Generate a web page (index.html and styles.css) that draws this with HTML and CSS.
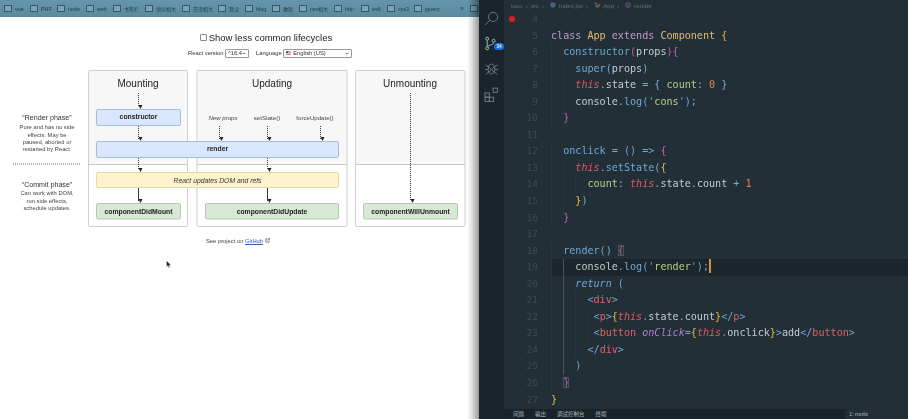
FILE: index.html
```html
<!DOCTYPE html>
<html lang="en">
<head>
    <meta charset="UTF-8">
    <meta name="viewport" content="width=device-width, initial-scale=1.0">
    <title>React lifecycle and App</title>
    <link rel="stylesheet" href="styles.css">
</head>
<body>
    <div class="browser">
        <div class="bookmarks">
            <span class="mark"><i class="folder"></i>vue</span>
            <span class="mark"><i class="folder"></i>PHP</span>
            <span class="mark"><i class="folder"></i>node</span>
            <span class="mark"><i class="folder"></i>web</span>
            <span class="mark cjk"><i class="folder"></i>书签栏</span>
            <span class="mark cjk"><i class="folder"></i>领导相关</span>
            <span class="mark cjk"><i class="folder"></i>日语相关</span>
            <span class="mark cjk"><i class="folder"></i>算法</span>
            <span class="mark"><i class="folder"></i>blog</span>
            <span class="mark cjk"><i class="folder"></i>教程</span>
            <span class="mark cjk"><i class="folder"></i>pos相关</span>
            <span class="mark"><i class="folder"></i>http</span>
            <span class="mark"><i class="folder"></i>es6</span>
            <span class="mark"><i class="folder"></i>css3</span>
            <span class="mark"><i class="folder"></i>jquery</span>
            <span class="mark more">»</span>
            <span class="mark"><i class="folder"></i></span>
        </div>
        <div class="lifecycle">
            <div class="toggle"><i class="checkbox"></i>Show less common lifecycles</div>
            <div class="options">
                <span>React version</span>
                <span class="select version">^16.4<svg class="chevron" viewBox="0 0 6 4"><path d="M1 1l2 2 2-2"/></svg></span>
                <span class="lang-label">Language</span>
                <span class="select language">
                    <svg class="flag" viewBox="0 0 6 4"><rect width="6" height="4" fill="#d8505a"/><rect y="1" width="6" height=".7" fill="#fff"/><rect y="2.5" width="6" height=".7" fill="#fff"/><rect width="2.6" height="2" fill="#3c4f9c"/></svg>
                    English (US)
                    <svg class="chevron" viewBox="0 0 6 4"><path d="M1 1l2 2 2-2"/></svg>
                </span>
            </div>
            <svg class="diagram" viewBox="0 60 470 178" width="470" height="178">
                <defs>
                    <marker id="tip" markerUnits="userSpaceOnUse" markerWidth="4" markerHeight="4" refX="1.5" refY="3" orient="auto-start-reverse" viewBox="0 0 3 3"><path d="M0 0L3 1.5L0 3z" fill="#222"/></marker>
                </defs>

                <rect class="panel-top" x="88.5" y="70.5" width="99" height="94"/>
                <rect class="panel-top" x="197" y="70.5" width="150" height="94"/>
                <rect class="panel-top" x="355.5" y="70.5" width="109.500" height="94"/>
                <rect class="panel" x="88.5" y="70.5" width="99" height="156" rx="1"/>
                <rect class="panel" x="197" y="70.5" width="150" height="156" rx="1"/>
                <rect class="panel" x="355.5" y="70.5" width="109.500" height="156" rx="1"/>
                <path class="rule" d="M88 164.500H188M197 164.500H347M355 164.500H465"/>

                <text class="heading" x="138" y="87">Mounting</text>
                <text class="heading" x="272" y="87">Updating</text>
                <text class="heading" x="410" y="87">Unmounting</text>

                <rect class="box blue" x="96.500" y="109.500" width="84" height="16" rx="1.500"/>
                <rect class="box blue" x="96.500" y="141.500" width="242" height="16" rx="1.500"/>
                <rect class="box yellow" x="96.500" y="172.500" width="242" height="15" rx="1.500"/>
                <rect class="box green" x="96.500" y="203.500" width="84" height="15.500" rx="1.500"/>
                <rect class="box green" x="205.500" y="203.500" width="133" height="15.500" rx="1.500"/>
                <rect class="box green" x="363.500" y="203.500" width="94" height="15.500" rx="1.500"/>

                <text class="method" x="138.500" y="119">constructor</text>
                <text class="method" x="217.500" y="151">render</text>
                <text class="commit" x="217.500" y="182.500">React updates DOM and refs</text>
                <text class="method" x="138.500" y="213.500">componentDidMount</text>
                <text class="method" x="272" y="213.500">componentDidUpdate</text>
                <text class="method" x="410.500" y="213.500">componentWillUnmount</text>

                <text class="trigger" x="223" y="119.500">New props</text>
                <text class="trigger plain" x="267" y="119.500">setState()</text>
                <text class="trigger plain" x="315" y="119.500">forceUpdate()</text>

                <g class="dots">
                    <line x1="138.500" y1="93" x2="138.500" y2="107"/>
                    <line x1="138.500" y1="126" x2="138.500" y2="139"/>
                    <line x1="138.500" y1="158" x2="138.500" y2="170"/>
                    <line x1="219.500" y1="126" x2="219.500" y2="139"/>
                    <line x1="267.500" y1="126" x2="267.500" y2="139"/>
                    <line x1="320.500" y1="126" x2="320.500" y2="139"/>
                    <line x1="267.500" y1="158" x2="267.500" y2="170"/>
                    <line x1="410.500" y1="93" x2="410.500" y2="201"/>
                </g>
                <g class="solid">
                    <line x1="138.500" y1="188" x2="138.500" y2="201"/>
                    <line x1="267.500" y1="188" x2="267.500" y2="201"/>
                </g>

                <text class="phase" x="47" y="120">“Render phase”</text>
                <text class="phase-text" x="47" y="129">Pure and has no side</text>
                <text class="phase-text" x="47" y="136.500">effects. May be</text>
                <text class="phase-text" x="47" y="143.500">paused, aborted or</text>
                <text class="phase-text" x="47" y="151">restarted by React.</text>
                <line class="split" x1="13" y1="164" x2="80" y2="164"/>
                <text class="phase" x="47" y="186.500">“Commit phase”</text>
                <text class="phase-text" x="47" y="195">Can work with DOM,</text>
                <text class="phase-text" x="47" y="202.500">run side effects,</text>
                <text class="phase-text" x="47" y="210">schedule updates.</text>
            </svg>
            <div class="project">See project on <a href="#">GitHub</a> <svg class="external" viewBox="0 0 6 6"><path d="M3 1H1v4h4V3M3 3l2.500-2.500M4 .5h1.500V2"/></svg></div>
        </div>
        <svg class="pointer" viewBox="0 0 6 9"><path d="M.5.5v6.500l1.500-1.300 1 2.300 1-.5-1-2.200h2z"/></svg>
    </div>

    <div class="activity">
        <span class="activity-item"><svg viewBox="0 0 14 14"><circle cx="8.500" cy="5.500" r="4.300"/><path d="M5.500 8.700L1 13"/></svg></span>
        <span class="activity-item bright">
            <svg viewBox="0 0 14 14"><circle cx="3" cy="2.500" r="1.400"/><circle cx="3" cy="11.500" r="1.400"/><circle cx="9" cy="4.500" r="1.400"/><path d="M3 4v6M9 6c0 2.500-4 2-6 4"/></svg>
            <b class="badge">34</b>
        </span>
        <span class="activity-item"><svg viewBox="0 0 14 14"><path d="M4 6c0-4 6-4 6 0v3c0 4-6 4-6 0zM4 5l6 6M10 5l-6 6M1.500 3.500L4 5.500M12.500 3.500L10 5.500M1 8h3M10 8h3M1.500 12.500L4 10.500M12.500 12.500L10 10.500"/></svg></span>
        <span class="activity-item"><svg viewBox="0 0 14 14"><rect x="1" y="5.500" width="4" height="4"/><rect x="1" y="9.500" width="4" height="4"/><rect x="5" y="9.500" width="4" height="4"/><rect x="8.500" y="1" width="4" height="4"/></svg></span>
    </div>

    <div class="editor">
        <div class="breadcrumbs">
            <span class="crumb">toco</span><span class="sep">›</span>
            <span class="crumb">src</span><span class="sep">›</span>
            <span class="crumb"><svg class="crumb-icon" viewBox="0 0 8 8"><ellipse cx="4" cy="4" rx="3.500" ry="1.400"/><ellipse cx="4" cy="4" rx="3.500" ry="1.400" transform="rotate(60 4 4)"/><ellipse cx="4" cy="4" rx="3.500" ry="1.400" transform="rotate(120 4 4)"/></svg>index.jsx</span><span class="sep">›</span>
            <span class="crumb"><svg class="crumb-icon app" viewBox="0 0 8 8"><path d="M1 2l2-1 1 1-2 1zM5 4l2-1v3l-2 1zM2 5l2-1 1 2-2 1z"/></svg>App</span><span class="sep">›</span>
            <span class="crumb"><svg class="crumb-icon method-icon" viewBox="0 0 8 8"><circle cx="4" cy="4" r="3.200"/><path d="M2.500 3.500L4 4.500l1.500-1M4 4.500V6"/></svg>render</span>
        </div>
        <div class="code">
<div class="line"><span class="ln">4</span><i class="breakpoint"></i></div>
<div class="line"><span class="ln">5</span><code><span class="k">class</span> <span class="y">App</span> <span class="k">extends</span> <span class="y">Component</span> <span class="b1">{</span></code></div>
<div class="line"><span class="ln">6</span><code><span class="ind">  </span><span class="f">constructor</span><span class="b2">(</span><span class="p">props</span><span class="b2">){</span></code></div>
<div class="line"><span class="ln">7</span><code><span class="ind">    </span><span class="f">super</span><span class="f">(</span><span class="p">props</span><span class="f">)</span></code></div>
<div class="line"><span class="ln">8</span><code><span class="ind">    </span><span class="r">this</span><span class="f">.</span><span class="p">state</span> <span class="o">=</span> <span class="f">{</span> <span class="s">count</span><span class="o">:</span> <span class="n">0</span> <span class="f">}</span></code></div>
<div class="line"><span class="ln">9</span><code><span class="ind">    </span><span class="p">console</span><span class="f">.log(</span><span class="f">'</span><span class="s">cons</span><span class="f">');</span></code></div>
<div class="line"><span class="ln">10</span><code><span class="ind">  </span><span class="b2">}</span></code></div>
<div class="line"><span class="ln">11</span></div>
<div class="line"><span class="ln">12</span><code><span class="ind">  </span><span class="f">onclick</span> <span class="o">=</span> <span class="f">()</span> <span class="f">=&gt;</span> <span class="b2">{</span></code></div>
<div class="line"><span class="ln">13</span><code><span class="ind">    </span><span class="r">this</span><span class="f">.setState(</span><span class="b1">{</span></code></div>
<div class="line"><span class="ln">14</span><code><span class="ind">      </span><span class="s">count</span><span class="o">:</span> <span class="r">this</span><span class="f">.</span><span class="p">state</span><span class="f">.</span><span class="p">count</span> <span class="o">+</span> <span class="n">1</span></code></div>
<div class="line"><span class="ln">15</span><code><span class="ind">    </span><span class="b1">}</span><span class="f">)</span></code></div>
<div class="line"><span class="ln">16</span><code><span class="ind">  </span><span class="b2">}</span></code></div>
<div class="line"><span class="ln">17</span></div>
<div class="line"><span class="ln">18</span><code><span class="ind">  </span><span class="f">render()</span> <span class="b2 match">{</span></code></div>
<div class="line current"><span class="ln">19</span><code><span class="ind act">    </span><span class="p">console</span><span class="f">.log(</span><span class="f">'</span><span class="s">render</span><span class="f">');</span><i class="caret"></i></code></div>
<div class="line"><span class="ln">20</span><code><span class="ind act">    </span><span class="ret">return</span> <span class="f">(</span></code></div>
<div class="line"><span class="ln">21</span><code><span class="ind act">      </span><span class="f">&lt;</span><span class="tag">div</span><span class="f">&gt;</span></code></div>
<div class="line"><span class="ln">22</span><code><span class="ind act">       </span><span class="f">&lt;</span><span class="tag">p</span><span class="f">&gt;</span><span class="b1">{</span><span class="r">this</span><span class="f">.</span><span class="p">state</span><span class="f">.</span><span class="p">count</span><span class="b1">}</span><span class="f">&lt;/</span><span class="tag">p</span><span class="f">&gt;</span></code></div>
<div class="line"><span class="ln">23</span><code><span class="ind act">       </span><span class="f">&lt;</span><span class="tag">button</span> <span class="at">onClick</span><span class="f">=</span><span class="b1">{</span><span class="r">this</span><span class="f">.</span><span class="p">onclick</span><span class="b1">}</span><span class="f">&gt;</span><span class="p">add</span><span class="f">&lt;/</span><span class="tag">button</span><span class="f">&gt;</span></code></div>
<div class="line"><span class="ln">24</span><code><span class="ind act">      </span><span class="f">&lt;/</span><span class="tag">div</span><span class="f">&gt;</span></code></div>
<div class="line"><span class="ln">25</span><code><span class="ind act">    </span><span class="f">)</span></code></div>
<div class="line"><span class="ln">26</span><code><span class="ind">  </span><span class="b2 match">}</span></code></div>
<div class="line"><span class="ln">27</span><code><span class="b1">}</span></code></div>
        </div>
        <div class="panel-tabs">
            <span>问题</span>
            <span>输出</span>
            <span>调试控制台</span>
            <span>终端</span>
            <span class="terminal-pick">1: node</span>
        </div>
    </div>
</body>
</html>
```

FILE: styles.css
```css
body{
    margin: 0;
    width: 908px;
    height: 419px;
    overflow: hidden;
    display: flex;
    background-color: #232f36;
}

/* browser side */
.browser{
    position: relative;
    width: 479px;
    flex: none;
    background-color: #fff;
    font-family: "Liberation Sans", Arial, "Noto Sans CJK SC", sans-serif;
    overflow: hidden;
}
.browser::after{
    content: "";
    position: absolute;
    top: 0;
    right: 0;
    bottom: 0;
    width: 12px;
    background: linear-gradient(90deg, rgba(0,0,0,0), rgba(0,0,0,.1) 35%, rgba(0,0,0,.4));
}
.bookmarks{
    display: grid;
    grid-template-columns: 26px 27px 29px 27px 32px 37px 36px 27px 27px 27px 35px 27px 26px 27px 46px 10px 9px;
    align-items: center;
    height: 17px;
    padding-left: 4px;
    background: linear-gradient(#6596ab, #5b8a9e);
    color: #223f4d;
    font-size: 5.4px;
    white-space: nowrap;
    filter: blur(.4px);
}
.mark{
    display: flex;
    align-items: center;
}
.mark.cjk{
    font-size: 5px;
}
.mark.more{
    font-size: 7px;
}
.folder{
    flex: none;
    width: 6px;
    height: 5px;
    margin-right: 3px;
    border: 1px solid #34586a;
    background-color: #7ba4b5;
}
.lifecycle{
    width: 470px;
    filter: blur(.35px);
}
.toggle{
    display: flex;
    align-items: center;
    justify-content: center;
    height: 10px;
    margin: 15px 0 0 62px;
    font-size: 9.500px;
    color: #222;
}
.checkbox{
    width: 5px;
    height: 5px;
    margin-right: 2px;
    border: 1px solid #8a8a8a;
    border-radius: 1px;
}
.options{
    display: flex;
    align-items: center;
    margin: 6px 0 0 188px;
    height: 10px;
    font-size: 5.800px;
    color: #333;
}
.select{
    display: flex;
    align-items: center;
    justify-content: space-between;
    box-sizing: border-box;
    height: 9px;
    margin-left: 1.500px;
    padding: 0 2px;
    border: 1px solid #999;
    border-radius: 1px;
}
.version{
    width: 24px;
}
.language{
    width: 69px;
    justify-content: flex-start;
}
.language .chevron{
    margin-left: auto;
}
.lang-label{
    margin-left: 7px;
}
.chevron{
    width: 4px;
    height: 3px;
    fill: none;
    stroke: #222;
    stroke-width: 1;
}
.flag{
    width: 5px;
    height: 4px;
    margin-right: 2px;
}
.diagram{
    display: block;
    margin-top: 2px;
    font-family: "Liberation Sans", Arial, sans-serif;
}
.panel-top{
    fill: #f7f7f7;
}
.panel{
    fill: none;
    stroke: #cfcfcf;
}
.rule{
    fill: none;
    stroke: #c9c9c9;
}
.heading{
    font-size: 10px;
    text-anchor: middle;
    fill: #222;
}
.box{
    stroke-width: 1;
}
.blue{
    fill: #d9e7fd;
    stroke: #a9bcdb;
}
.yellow{
    fill: #fdf3cd;
    stroke: #e6d9a6;
}
.green{
    fill: #d7e8d4;
    stroke: #b5c7b2;
}
.method{
    font-size: 6.800px;
    font-weight: bold;
    text-anchor: middle;
    fill: #222;
}
.commit{
    font-size: 6.800px;
    font-style: italic;
    text-anchor: middle;
    fill: #333;
}
.trigger{
    font-size: 6.100px;
    font-style: italic;
    text-anchor: middle;
    fill: #444;
}
.trigger.plain{
    font-style: normal;
}
.dots line{
    stroke: #222;
    stroke-width: .9;
    stroke-dasharray: 1 1;
    marker-end: url(#tip);
}
.solid line{
    stroke: #222;
    stroke-width: .9;
    marker-end: url(#tip);
}
.phase{
    font-size: 7.100px;
    text-anchor: middle;
    fill: #333;
}
.phase-text{
    font-size: 5.800px;
    text-anchor: middle;
    fill: #444;
}
.split{
    stroke: #666;
    stroke-width: 1;
    stroke-dasharray: 1 1;
}
.project{
    margin: 0 0 0 206px;
    font-size: 5.800px;
    color: #444;
}
.project a{
    color: #2a62b8;
}
.external{
    width: 5px;
    height: 5px;
    fill: none;
    stroke: #333;
    stroke-width: .7;
}
.pointer{
    position: absolute;
    left: 166px;
    top: 260px;
    width: 6px;
    height: 9px;
    fill: #222;
    stroke: #fff;
    stroke-width: .4;
}

/* vscode side */
.activity{
    width: 25px;
    flex: none;
    padding-top: 5.500px;
    background-color: #19252b;
}
.activity-item{
    position: relative;
    display: flex;
    align-items: center;
    justify-content: center;
    height: 25.400px;
}
.activity-item svg{
    width: 15px;
    height: 15px;
    fill: none;
    stroke: #6c7a81;
    stroke-width: .9;
}
.activity-item.bright svg{
    stroke: #a6b5bc;
}
.badge{
    position: absolute;
    left: 15px;
    top: 12px;
    width: 10px;
    height: 7px;
    border-radius: 4px;
    background-color: #1a6fe0;
    color: #e8f0ff;
    font: bold 4.500px/7px "Liberation Sans", sans-serif;
    text-align: center;
}
.editor{
    flex: 1;
    display: flex;
    flex-direction: column;
    min-width: 0;
}
.breadcrumbs{
    display: flex;
    align-items: center;
    height: 10px;
    padding-left: 7px;
    font-family: "Liberation Sans", sans-serif;
    font-size: 6.200px;
    color: #5e7079;
    white-space: nowrap;
    filter: blur(.3px);
}
.crumb{
    display: flex;
    align-items: center;
}
.sep{
    margin: 0 3px;
}
.crumb-icon{
    width: 6px;
    height: 6px;
    margin: 0 3px 0 3px;
    fill: none;
    stroke: #4f8fb5;
    stroke-width: .7;
}
.crumb-icon.app{
    stroke: #b98a45;
}
.crumb-icon.method-icon{
    stroke: #9b7cc2;
}
.code{
    flex: 1;
    padding-top: 1px;
    overflow: hidden;
    font-family: "DejaVu Sans Mono", "Liberation Mono", monospace;
    font-size: 10.100px;
    color: #c3ced2;
    filter: blur(.2px);
}
.line{
    position: relative;
    display: flex;
    height: 16.550px;
    line-height: 16.550px;
}
.ln{
    width: 34px;
    flex: none;
    text-align: right;
    color: #3c4b53;
    font-size: 9.500px;
}
.line code{
    margin-left: 13px;
    font: inherit;
    white-space: pre;
}
.line.current code{
    flex: 1;
    background-color: #1b252b;
}
.breakpoint{
    position: absolute;
    left: 5px;
    top: 5px;
    width: 6px;
    height: 6px;
    border-radius: 50%;
    background-color: #e01e1e;
}
.ind{
    display: inline-block;
    height: 16.550px;
    vertical-align: top;
    background: repeating-linear-gradient(90deg, #29363d 0 1px, transparent 1px 12.160px);
}
.ind.act{
    background: linear-gradient(90deg, transparent 12.160px, #47545b 12.160px 13.160px, transparent 13.160px),
                repeating-linear-gradient(90deg, #29363d 0 1px, transparent 1px 12.160px);
}
.caret{
    display: inline-block;
    width: 1.500px;
    height: 14px;
    vertical-align: -3px;
    background-color: #d3953a;
}
.match{
    outline: 1px solid #4a575e;
    outline-offset: -1px;
}
.k{ color: #c49ac9; }
.y{ color: #e3bd7a; }
.f{ color: #6ea8d8; }
.p{ color: #c3ced2; }
.o{ color: #6fb3c7; }
.r{ color: #e0566a; font-style: italic; }
.s{ color: #b5cf8a; }
.n{ color: #e57f5c; }
.b1{ color: #e5b93c; }
.b2{ color: #c55fa8; }
.ret{ color: #6ea8d8; font-style: italic; }
.tag{ color: #e0606a; }
.at{ color: #a97fd0; font-style: italic; }
.panel-tabs{
    display: flex;
    align-items: flex-start;
    height: 10px;
    padding-left: 9px;
    background-color: #19242a;
    font-family: "Noto Sans CJK SC", "Liberation Sans", sans-serif;
    font-size: 5.500px;
    line-height: 11px;
    color: #a7b4ba;
}
.panel-tabs span{
    margin-right: 11px;
}
.panel-tabs .terminal-pick{
    margin: 0 0 0 auto;
    width: 59px;
    height: 10px;
    padding-left: 4px;
    background-color: #232f36;
    border-radius: 2px 0 0 0;
}
```
